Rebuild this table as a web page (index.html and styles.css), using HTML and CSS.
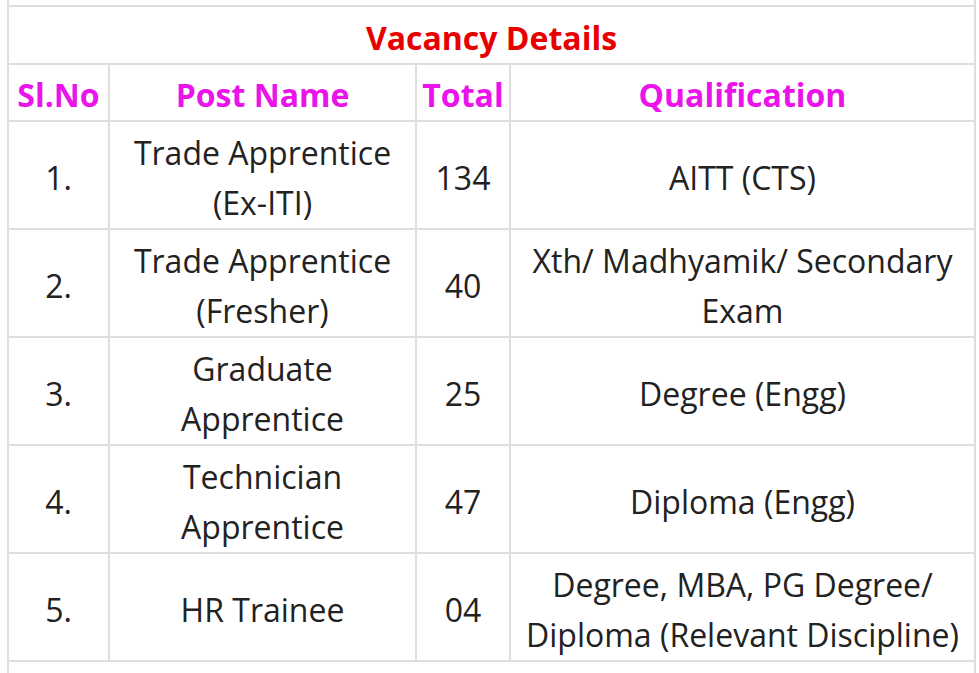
FILE: index.html
```html
<!DOCTYPE html>
<html lang="en">
<head>
<meta charset="utf-8">
<title>Vacancy Details</title>
<link rel="stylesheet" href="styles.css">
</head>
<body>
<div class="page">
<table class="vacancy">
<colgroup>
<col class="c-sl">
<col class="c-post">
<col class="c-total">
<col class="c-qual">
</colgroup>
<tbody>
<tr class="spacer-top"><td colspan="4"></td></tr>
<tr class="title-row"><td colspan="4">Vacancy Details</td></tr>
<tr class="head-row">
<td>Sl.No</td>
<td>Post Name</td>
<td>Total</td>
<td>Qualification</td>
</tr>
<tr>
<td>1.</td>
<td>Trade Apprentice (Ex-ITI)</td>
<td>134</td>
<td>AITT (CTS)</td>
</tr>
<tr>
<td>2.</td>
<td>Trade Apprentice (Fresher)</td>
<td>40</td>
<td>Xth/ Madhyamik/ Secondary Exam</td>
</tr>
<tr>
<td>3.</td>
<td>Graduate Apprentice</td>
<td>25</td>
<td>Degree (Engg)</td>
</tr>
<tr>
<td>4.</td>
<td>Technician Apprentice</td>
<td>47</td>
<td>Diploma (Engg)</td>
</tr>
<tr>
<td>5.</td>
<td>HR Trainee</td>
<td>04</td>
<td>Degree, MBA, PG Degree/ Diploma (Relevant Discipline)</td>
</tr>
<tr class="spacer-bottom"><td colspan="4"></td></tr>
</tbody>
</table>
</div>
</body>
</html>
```
FILE: styles.css
```css
html, body {
  margin: 0;
  padding: 0;
  background: #ffffff;
}

body {
  font-family: "Open Sans", "Noto Sans", "Liberation Sans", sans-serif;
  color: #222222;
  overflow: hidden;
}

.page {
  padding-left: 7px;
  width: 967px;
}

.vacancy {
  width: 967px;
  table-layout: fixed;
  border-collapse: collapse;
  margin-top: -2px;
}

.c-sl { width: 101px; }
.c-post { width: 307px; }
.c-total { width: 94px; }
.c-qual { width: 465px; }

.vacancy td {
  border: 2px solid #dedede;
  text-align: center;
  vertical-align: middle;
  font-size: 32px;
  line-height: 50px;
  padding: 6px 4px 0;
}

.spacer-top td {
  height: 5px;
  padding: 0;
  line-height: 0;
}

.spacer-bottom td {
  height: 11px;
  padding: 0;
  line-height: 0;
  border-bottom-color: transparent;
}

.title-row td {
  color: #e80000;
  font-weight: 700;
  padding: 6px 4px 0;
}

.head-row td {
  color: #ea14ea;
  font-weight: 700;
  padding: 5px 0 0;
}
```
